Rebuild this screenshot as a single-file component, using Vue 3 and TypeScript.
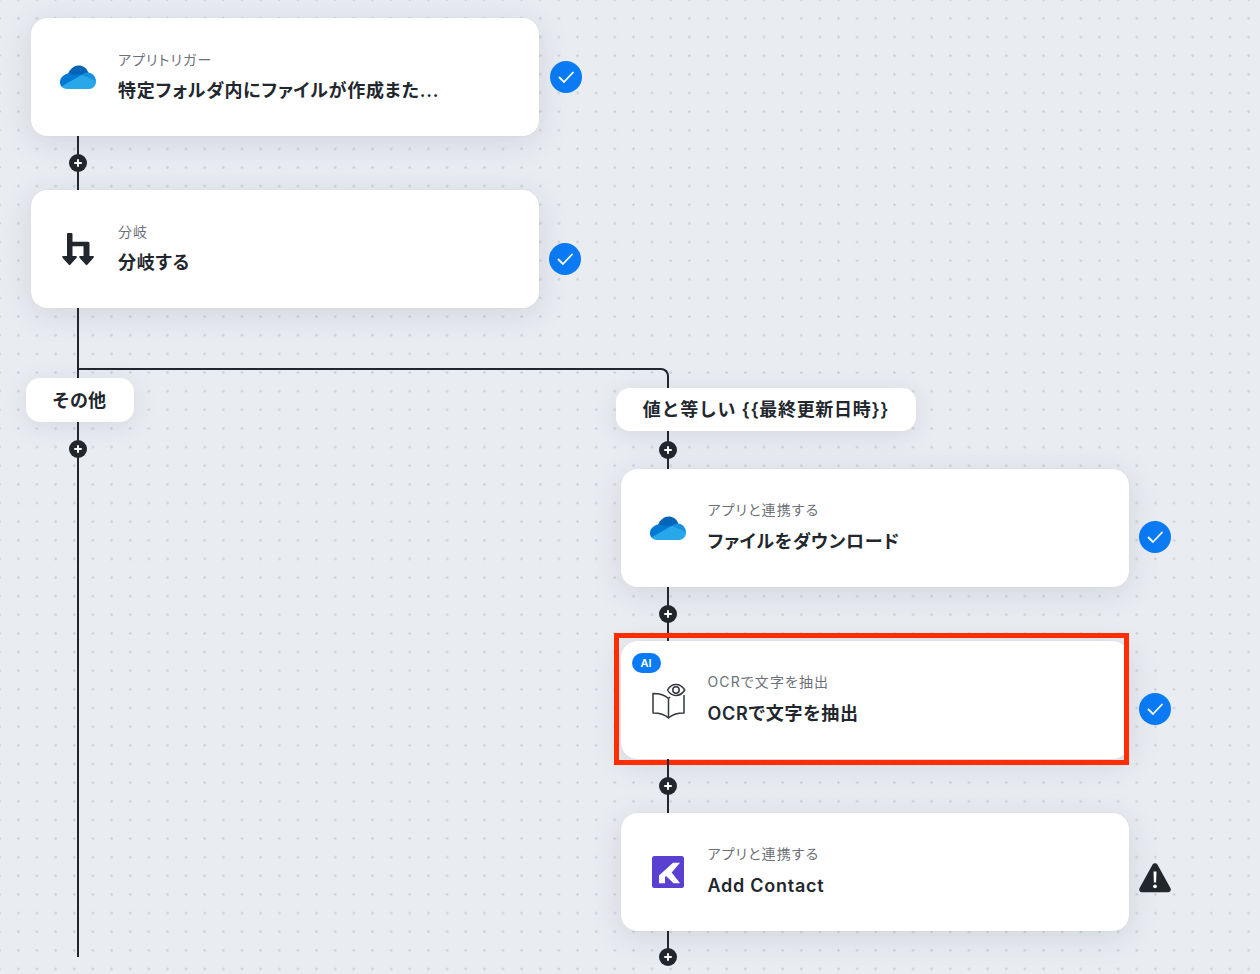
<script setup lang="ts">
type Icon = 'onedrive' | 'branch' | 'ocr' | 'kommo'
type Status = 'ok' | 'warn'
interface Step {
  icon: Icon
  label: string
  title: string
  status: Status
  ai?: boolean
  highlight?: boolean
}
const rightSteps: Step[] = [
  { icon: 'onedrive', label: 'アプリと連携する', title: 'ファイルをダウンロード', status: 'ok' },
  { icon: 'ocr', label: 'OCRで文字を抽出', title: 'OCRで文字を抽出', status: 'ok', ai: true, highlight: true },
  { icon: 'kommo', label: 'アプリと連携する', title: 'Add Contact', status: 'warn' },
]
</script>

<template>
  <div class="canvas">
    <div class="trunk">
      <div class="step">
        <div class="card">
          <svg class="ic-onedrive" viewBox="0 0 36 24" aria-hidden="true">
            <path fill="#0364b8" d="M8 9C10 3.500 14.500 .5 18.600 .5c4.200 0 8 2.500 9.700 7L24 16H12z" />
            <path fill="#0078d4" d="M8.600 8.400C3.600 9 0 12.800 0 17c0 1.700.5 3.200 1.300 4.500L8 22 21.800 9.800 12 9.600z" />
            <path fill="#1490df" d="M27.500 7.400c4.900.2 8.500 4 8.500 8.800V18L21.800 9.800c1.800-1.600 3.600-2.500 5.700-2.400z" />
            <path fill="#28a8ea" d="M1.300 21.500C2.600 23 4.500 24 6.800 24H29c3.800 0 7-3.300 7-7.500v-.5L21.800 9.700z" />
          </svg>
          <div class="text">
            <div class="label">アプリトリガー</div>
            <div class="title">特定フォルダ内にファイルが作成また...</div>
          </div>
        </div>
        <span class="check"><svg viewBox="0 0 32 32"><path d="M9.500 16.500l4.500 4.500 9-9.500" /></svg></span>
      </div>
      <div class="wire gap"><span class="plus" /></div>
      <div class="step tight">
        <div class="card">
          <svg class="ic-branch" viewBox="0 0 32 34" aria-hidden="true">
            <path fill="#22272e" d="M6 1h3.500a1 1 0 0 1 1 1v7.800H26a1.500 1.500 0 0 1 1.500 1.500V24h3.300c1 0 1.400 1 .8 1.700l-6.300 7.100a1 1 0 0 1-1.500 0l-6.300-7.100c-.6-.7-.2-1.700.8-1.700h3.200v-9.700H10.500V24h3.300c1 0 1.400 1 .8 1.700l-6.300 7.100a1 1 0 0 1-1.500 0L.5 25.700C-.1 25 .3 24 1.300 24H5V2a1 1 0 0 1 1-1z" />
          </svg>
          <div class="text">
            <div class="label">分岐</div>
            <div class="title">分岐する</div>
          </div>
        </div>
        <span class="check low"><svg viewBox="0 0 32 32"><path d="M9.500 16.500l4.500 4.500 9-9.500" /></svg></span>
      </div>
    </div>

    <div class="branches">
      <span class="elbow" />
      <div class="branch-left">
        <div class="wire lead" />
        <div class="pill other">その他</div>
        <div class="wire long"><span class="plus" /></div>
      </div>
      <div class="branch-right">
        <div class="pill cond">値と等しい {{ '{' + '{' }}最終更新日時{{ '}' + '}' }}</div>
        <div class="wire first"><span class="plus" /></div>
        <template v-for="s in rightSteps" :key="s.title">
          <div class="step r">
            <div class="card">
              <span v-if="s.ai" class="ai">AI</span>
              <span v-if="s.highlight" class="mark" />
              <svg v-if="s.icon === 'onedrive'" class="ic-onedrive" viewBox="0 0 36 24" aria-hidden="true">
                <path fill="#0364b8" d="M8 9C10 3.500 14.500 .5 18.600 .5c4.200 0 8 2.500 9.700 7L24 16H12z" />
                <path fill="#0078d4" d="M8.600 8.400C3.600 9 0 12.800 0 17c0 1.700.5 3.200 1.300 4.500L8 22 21.800 9.800 12 9.600z" />
                <path fill="#1490df" d="M27.500 7.400c4.900.2 8.500 4 8.500 8.800V18L21.800 9.800c1.800-1.600 3.600-2.500 5.700-2.400z" />
                <path fill="#28a8ea" d="M1.300 21.500C2.600 23 4.500 24 6.800 24H29c3.800 0 7-3.300 7-7.500v-.5L21.800 9.700z" />
              </svg>
              <svg v-else-if="s.icon === 'ocr'" class="ic-ocr" viewBox="0 0 34 37" fill="none" stroke="#33383f" stroke-width="1.500" stroke-linejoin="round" aria-hidden="true">
                <path d="M16.500 15.500C13 12 7 10.500 1 10.500V30c6 0 12 1.500 15.500 5 3.500-3.500 9.500-5 15.500-5V12" />
                <path d="M16.500 15.500V35M16.500 15.500c.5-.6 1-1 1.700-1.500" />
                <path d="M15.500 7c2-3.500 5-5.500 8.500-5.500S30.500 3.500 32.800 7c-2.300 3.500-5.300 5.500-8.800 5.500S17.500 10.500 15.500 7z" />
                <circle cx="24" cy="7" r="3.200" />
              </svg>
              <svg v-else class="ic-kommo" viewBox="0 0 32 32" aria-hidden="true">
                <rect width="32" height="32" rx="2.500" fill="#5b3fd1" />
                <path fill="#fff" d="M21 6.700h7l-8.300 9.800L28 27.300h-6.500L14 20l-1 1v6.300H7v-7.800z" />
              </svg>
              <div class="text">
                <div class="label">{{ s.label }}</div>
                <div class="title">{{ s.title }}</div>
              </div>
            </div>
            <span v-if="s.status === 'ok'" class="check low"><svg viewBox="0 0 32 32"><path d="M9.500 16.500l4.500 4.500 9-9.500" /></svg></span>
            <svg v-else class="warn" viewBox="0 0 32 30" aria-hidden="true">
              <path fill="#22272e" d="M13.600 1.600a2.800 2.800 0 0 1 4.800 0l13 23.500a2.800 2.800 0 0 1-2.400 4.200H3a2.800 2.800 0 0 1-2.400-4.200z" />
              <path fill="#fff" d="M14.500 8.500h3l-.4 11h-2.200z" />
              <circle fill="#fff" cx="16" cy="23.300" r="1.900" />
            </svg>
          </div>
          <div class="wire gap" :class="{ tail: s.icon === 'kommo' }"><span class="plus" /></div>
        </template>
      </div>
    </div>
  </div>
</template>

<style>
html, body { margin: 0; background: #e9ecf1; }
</style>

<style scoped>
.canvas {
  position: relative;
  width: 1260px;
  height: 974px;
  overflow: hidden;
  box-sizing: border-box;
  padding-top: 18px;
  font-family: Inter, "Noto Sans CJK JP", sans-serif;
  color: #22272e;
  background-color: #e9ecf1;
  background-image: radial-gradient(circle at 9.325px 9.325px, #ced2d8 0, #ced2d8 1px, transparent 1.500px);
  background-size: 18.650px 18.650px;
  background-position: 9px 9px;
}
.trunk { margin-left: 31px; }
.step { display: flex; align-items: center; gap: 11px; }
.step.tight { gap: 10px; }
.card {
  position: relative;
  box-sizing: border-box;
  width: 508px;
  height: 118px;
  flex: none;
  display: flex;
  align-items: center;
  background: #fff;
  border-radius: 16px;
  box-shadow: 0 6px 32px rgba(40, 50, 70, 0.12), 0 0 1px rgba(40, 50, 70, 0.15);
}
.text { position: absolute; left: 87px; top: 32px; }
.label {
  font-size: 14px;
  line-height: 20px;
  color: #6b7178;
  white-space: nowrap;
  font-feature-settings: "palt";
  letter-spacing: 1.100px;
}
.title {
  margin-top: 10px;
  font-size: 18px;
  line-height: 22px;
  font-weight: 600;
  letter-spacing: 0.750px;
  white-space: nowrap;
  font-feature-settings: "palt";
}
.ic-onedrive { width: 36px; height: 24px; margin: -1px 0 0 29px; flex: none; }
.ic-branch { width: 32px; height: 34px; margin: 0 0 0 31px; flex: none; }
.ic-ocr { width: 34px; height: 37px; margin: 2px 0 0 31px; flex: none; }
.ic-kommo { width: 32px; height: 32px; margin: 0 0 0 31px; flex: none; }
.check {
  width: 32px;
  height: 32px;
  border-radius: 50%;
  background: #0a7bf5;
  flex: none;
}
.check.low { margin-top: 20px; }
.check svg { display: block; width: 32px; height: 32px; fill: none; stroke: #fff; stroke-width: 1.800; stroke-linecap: round; stroke-linejoin: round; }
.warn { width: 32px; height: 30px; flex: none; margin-top: 12px; }
.wire { position: relative; width: 2px; background: #22272e; }
.wire.gap { height: 54px; margin-left: 46px; }
.wire.gap.tail { height: 26px; }
.plus {
  position: absolute;
  left: 1px;
  top: 50%;
  width: 18px;
  height: 18px;
  margin: -9px 0 0 -9px;
  border-radius: 50%;
  background: #22272e;
}
.plus::before, .plus::after {
  content: "";
  position: absolute;
  background: #fff;
  border-radius: 1px;
}
.plus::before { left: 5px; top: 8px; width: 8px; height: 2px; }
.plus::after { left: 8px; top: 5px; width: 2px; height: 8px; }
.wire.gap.tail .plus { top: 100%; }
.branches { position: relative; display: flex; }
.elbow {
  position: absolute;
  left: 78px;
  top: 60px;
  width: 591px;
  height: 20px;
  box-sizing: border-box;
  border-top: 2px solid #22272e;
  border-right: 2px solid #22272e;
  border-top-right-radius: 8px;
}
.branch-left { margin-left: 26px; width: 590px; flex: none; }
.branch-right { padding-top: 80px; }
.wire.lead { height: 70px; margin-left: 51px; }
.wire.long { height: 535px; margin-left: 51px; }
.wire.long .plus { top: 27px; margin-top: -9px; }
.pill {
  position: relative;
  display: flex;
  align-items: center;
  justify-content: center;
  box-sizing: border-box;
  padding-bottom: 2px;
  background: #fff;
  border-radius: 14px;
  font-size: 18px;
  font-weight: 600;
  white-space: nowrap;
  box-shadow: 0 4px 24px rgba(40, 50, 70, 0.1);
}
.other { width: 108px; height: 44px; padding-right: 2px; }
.cond { width: 300px; height: 43px; letter-spacing: 0.700px; padding-bottom: 3px; }
.wire.first { height: 38px; margin-left: 51px; }
.wire.first .plus { top: 18px; margin-top: -8px; }
.step.r { margin-left: 4.500px; gap: 10px; }
.step.r .check.low { margin-top: 18px; }
.step.r .text { top: 31px; }
.step.r .title { margin-top: 11px; }
.step.r + .wire { margin-left: 51px; }
.ai {
  position: absolute;
  left: 11px;
  top: 12px;
  width: 29px;
  height: 20px;
  border-radius: 10px;
  background: #0a7bf5;
  color: #fff;
  font-size: 11px;
  font-weight: 600;
  line-height: 20px;
  text-align: center;
}
.mark {
  position: absolute;
  left: -7px;
  top: -8px;
  right: 0;
  bottom: -6px;
  border: 5px solid #ff2d00;
  pointer-events: none;
}
</style>
